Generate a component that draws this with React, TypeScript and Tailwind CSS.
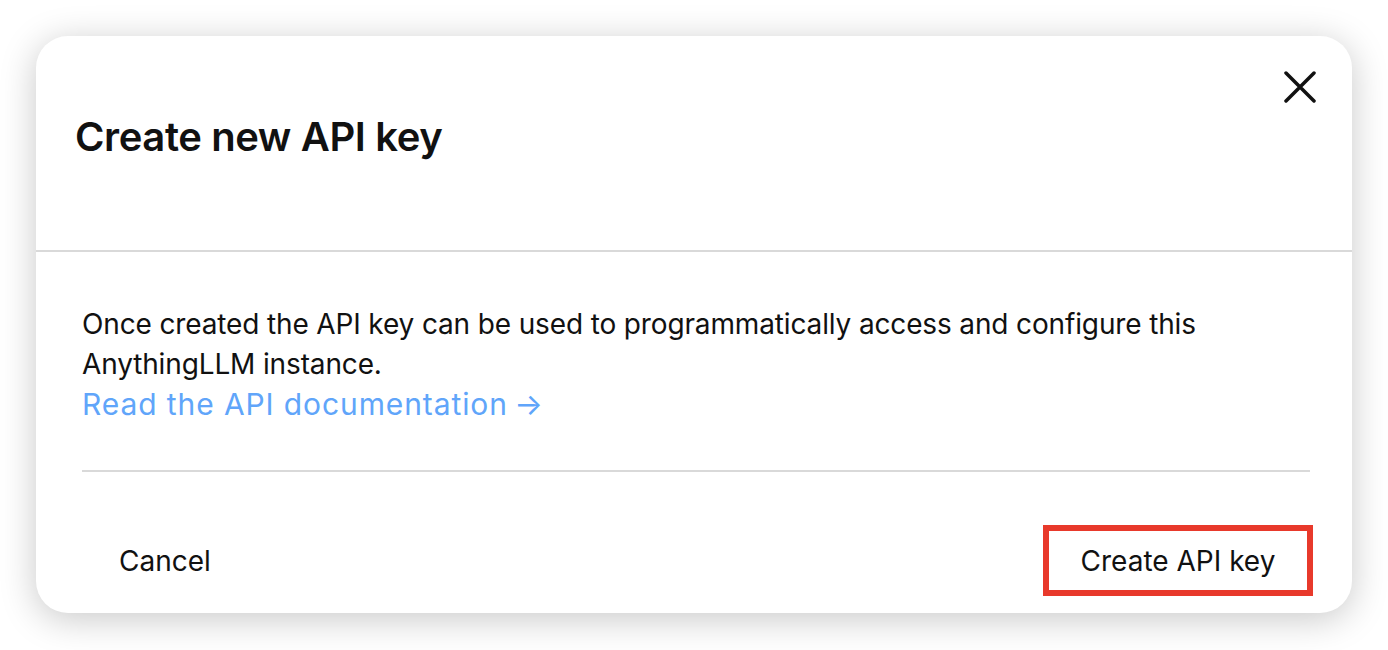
export default function App() {
  return (
    <div
      className="w-full h-[650px] bg-white p-9"
      style={{ fontFamily: "Inter, 'Open Sans', sans-serif" }}
    >
      <div className="w-[1316px] h-[577px] bg-white rounded-[32px] shadow-[0_6px_36px_rgba(0,0,0,0.22)] flex flex-col">
        {/* Header */}
        <div className="h-[216px] shrink-0 border-b-2 border-[#d9d9d9] flex justify-between items-start pl-[39px] pr-[36px]">
          <h1 className="mt-[77px] text-[40px] leading-[48px] font-semibold tracking-[-0.01em] text-[#111]">
            Create new API key
          </h1>
          <button className="mt-[35px] w-8 h-8 text-[#111]">
            <svg viewBox="0 0 32 32" width="32" height="32" fill="none" stroke="currentColor" strokeWidth="3.5" strokeLinecap="round">
              <path d="M2 2 L30 30 M30 2 L2 30" />
            </svg>
          </button>
        </div>

        {/* Body */}
        <div className="flex-1 flex flex-col pl-[46px] pr-[39px]">
          <div className="pt-[52px] pb-[45px] mr-[3px] border-b-2 border-[#d9d9d9] text-[28px] leading-[40px] tracking-[-0.005em] text-[#111]">
            <p>
              Once created the API key can be used to programmatically access and configure this
              <br />
              AnythingLLM instance.
            </p>
            <a className="text-[30px] tracking-[0.03em] text-[#60a5fa]">Read the API documentation&thinsp;&rarr;</a>
          </div>

          {/* Footer */}
          <div className="flex justify-between items-center mt-[53px]">
            <button className="h-[71px] px-[37px] text-[28px] text-[#111]">Cancel</button>
            <button className="h-[71px] w-[270px] border-[6px] border-[#e8392b] text-[28px] text-[#111]">
              Create API key
            </button>
          </div>
        </div>
      </div>
    </div>
  );
}
